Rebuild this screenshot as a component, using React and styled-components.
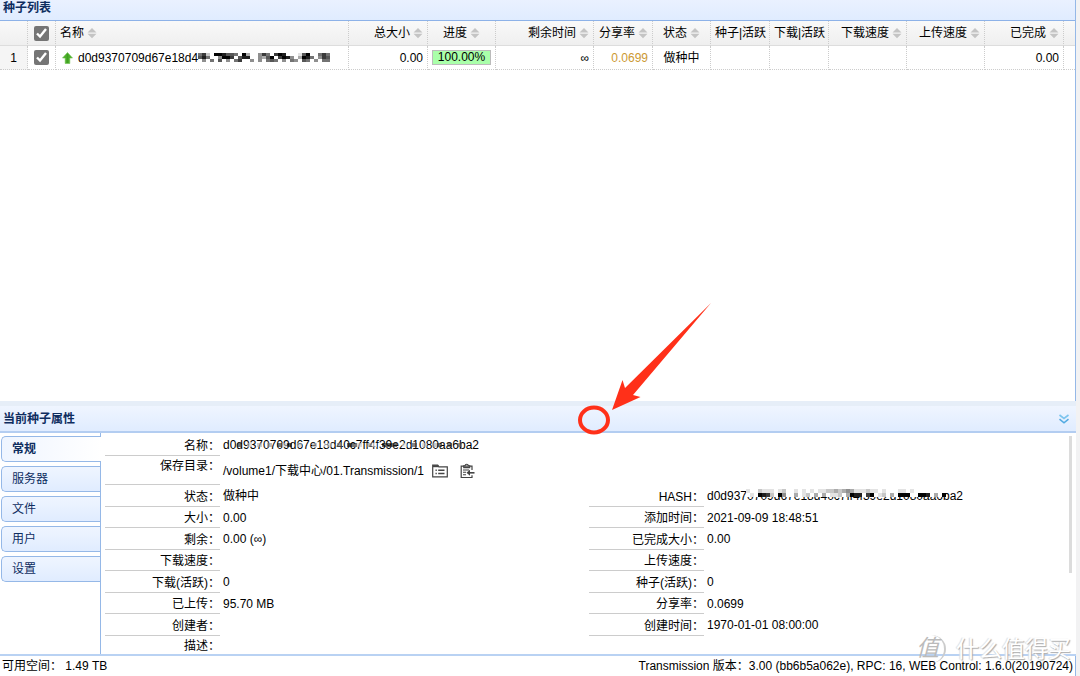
import React, { useState } from 'react';
import styled, { createGlobalStyle } from 'styled-components';

const GlobalStyle = createGlobalStyle`
  * {
    box-sizing: border-box;
  }

  body {
    margin: 0;
    background: #fff;
    color: #000;
    font: 12px/20px "Liberation Sans", "Noto Sans CJK SC", sans-serif;
  }

  button {
    padding: 0;
    border: none;
    background: none;
    color: inherit;
    font: inherit;
    cursor: pointer;
  }
`;

const Page = styled.div`
  display: flex;
  flex-direction: column;
  min-height: 100vh;
  padding-right: 4px;
  background: #f2f2f3;
`;

const ListPanel = styled.section`
  flex: 1;
  border-right: 1px solid #95b8e7;
  background: #fff;
`;

const PanelTitle = styled.h2`
  margin: 0;
  color: #0e2d5f;
  font-size: 12px;
  line-height: 16px;
`;

const ListHeader = styled.header`
  height: 21px;
  padding: 0 3px 4px;
  border-bottom: 1px solid #8db2e8;
  background: linear-gradient(to bottom, #eaf1ff, #e0ecff);
`;

const TorrentTable = styled.table`
  width: 100%;
  table-layout: fixed;
  border-collapse: separate;
  border-spacing: 0;
`;

const Col = styled.col`
  width: ${(props) => (props.$width ? `${props.$width}px` : 'auto')};
`;

const HeadCell = styled.th`
  height: 25px;
  padding: 0 4px;
  border-right: 1px dotted #ccc;
  border-bottom: 1px solid #ddd;
  background: linear-gradient(to bottom, #f9f9f9, #efefef);
  font-weight: normal;
  text-align: ${(props) => props.$align || 'center'};
  white-space: nowrap;

  &:last-child {
    border-right: none;
  }
`;

const Cell = styled.td`
  height: 24px;
  padding: 0 4px;
  border-right: 1px dotted #ccc;
  border-bottom: 1px dotted #ccc;
  background: ${(props) => (props.$number ? '#f5f5f5' : '#fff')};
  color: ${(props) => props.$color || '#000'};
  text-align: ${(props) => props.$align || 'center'};
  white-space: nowrap;

  &:last-child {
    border-right: none;
  }
`;

const SortButton = styled.button`
  display: inline-flex;
  align-items: center;
  gap: 3px;
`;

const Checkbox = styled.input`
  display: block;
  width: 15px;
  height: 15px;
  margin: 0 auto;
  accent-color: #757575;
`;

const NameBox = styled.div`
  display: flex;
  align-items: center;
  padding-left: 2px;

  svg:first-child {
    margin-right: 5px;
  }
`;

const Progress = styled.div`
  height: 15px;
  border: 1px solid #bbb;
  background: #aaffaa;
  line-height: 13px;
`;

const Splitter = styled.div`
  height: 5px;
  background: #e6eef8;
`;

const DetailHeader = styled.header`
  position: relative;
  display: flex;
  align-items: center;
  justify-content: space-between;
  height: 27px;
  padding: 0 6px 0 3px;
  border-bottom: 2px solid #b3cdf1;
  background: linear-gradient(to bottom, #eff5ff, #e0ecff);
`;

const CollapseButton = styled.button`
  display: flex;
`;

const Annotation = styled.svg`
  position: absolute;
  z-index: 1;
  left: 576px;
  bottom: -6px;
  pointer-events: none;
`;

const DetailBody = styled.div`
  position: relative;
  display: flex;
  border-bottom: 2px solid #b9d2f3;
  background: #fff;
`;

const Tabs = styled.nav`
  display: flex;
  flex-direction: column;
  gap: 4px;
  width: 101px;
  padding: 3px 0 0 1px;
  border-right: 1px solid #95b8e7;
`;

const Tab = styled.button`
  height: 26px;
  margin-right: ${(props) => (props.$active ? '-1px' : '0')};
  padding-left: 10px;
  border: 1px solid #95b8e7;
  border-right: none;
  border-radius: 5px 0 0 5px;
  background: ${(props) =>
    props.$active
      ? 'linear-gradient(to right, #eff5ff, #fff)'
      : 'linear-gradient(to bottom, #eff5ff, #e0ecff)'};
  color: #0e2d5f;
  font-weight: ${(props) => (props.$active ? 'bold' : 'normal')};
  text-align: left;
`;

const DetailContent = styled.div`
  flex: 1;
  padding: 1px 3px 0 4px;
`;

const DetailTable = styled.table`
  width: 100%;
  table-layout: fixed;
  border-spacing: 0;
`;

const DetailRow = styled.tr`
  height: ${(props) => (props.$tall ? '29px' : '21px')};

  &:nth-child(odd) {
    height: 22px;
  }

  &:last-child {
    height: 18px;
  }
`;

const Label = styled.th`
  padding: 2px 0 0;
  border-bottom: ${(props) => (props.$last ? 'none' : '1px solid #ccc')};
  font-weight: normal;
  line-height: 16px;
  text-align: right;
  vertical-align: ${(props) => (props.$top ? 'top' : 'middle')};
`;

const Value = styled.td`
  padding: 0 0 0 3px;
  line-height: 18px;
  white-space: nowrap;
`;

const ValueBox = styled.div`
  display: flex;
  align-items: center;
`;

const IconButton = styled.button`
  display: flex;
  margin-left: ${(props) => (props.$wide ? '12px' : '8px')};
`;

const MaskedText = styled.span`
  position: relative;
  display: inline-block;
`;

const MaskLayer = styled.span`
  position: absolute;
  top: ${(props) => props.$top}px;
  left: ${(props) => props.$left}px;
  line-height: 0;
`;

const ScrollThumb = styled.div`
  position: absolute;
  top: 3px;
  right: 4px;
  width: 3px;
  height: 62%;
  background: #dcdcdc;
`;

const StatusBar = styled.footer`
  position: relative;
  display: flex;
  justify-content: space-between;
  height: 20px;
  padding: 0 2px;
  border-right: 1px solid #95b8e7;
  background: #fff;
`;

const Watermark = styled.div`
  position: absolute;
  right: 4px;
  bottom: 13px;
  display: flex;
  align-items: center;
  gap: 10px;
  color: #fff;
  font-size: 23px;
  line-height: 26px;
  text-shadow: 1px 1px 1px #aaa, -1px 0 1px #ddd;
  pointer-events: none;
`;

const WatermarkBadge = styled.span`
  width: 30px;
  height: 28px;
  border-right: 2px solid #ccc;
  border-radius: 50%;
  color: #bbb;
  font-style: italic;
  text-shadow: none;
`;

const columns = [
  { label: '总大小', align: 'right', sort: true },
  { label: '进度', sort: true },
  { label: '剩余时间', align: 'right', sort: true },
  { label: '分享率', align: 'right', sort: true },
  { label: '状态', sort: true },
  { label: '种子|活跃' },
  { label: '下载|活跃' },
  { label: '下载速度', align: 'right', sort: true },
  { label: '上传速度', align: 'right', sort: true },
  { label: '已完成', align: 'right', sort: true },
];

const columnWidths = [28, 28, 293, 79, 68, 98, 59, 58, 59, 59, 78, 78, 79, null];

const tabs = ['常规', '服务器', '文件', '用户', '设置'];

const pairs = [
  ['大小', '0.00', '添加时间', '2021-09-09 18:48:51'],
  ['剩余', '0.00 (∞)', '已完成大小', '0.00'],
  ['下载速度', '', '上传速度', ''],
  ['下载(活跃)', '0', '种子(活跃)', '0'],
  ['已上传', '95.70 MB', '分享率', '0.0699'],
  ['创建者', '', '创建时间', '1970-01-01 08:00:00'],
];

// each character is one block: 0 is white, 9 is black, a dot is left clear
const nameMask = [
  '572.998665.93..475.798...169..575',
  '685..4997.688..4369.7984.3985.4764',
  '.4.5.6.4.57..4.4.565.4.54.65.4.5566',
].map((row) => row.slice(0, 33));
const titleMask = ['8.2.3.4.829.2..3.02.5.982.40.998.1.7.2.38.7.6'];
const hashMask = [
  '10021110120010101011223234311121101000110100000000',
  '01098720940030120303011203988079012030999009980309',
];

const Mosaic = ({ rows, width, height, opacity = 1 }) => (
  <svg
    width={rows[0].length * width}
    height={rows.length * height}
    shapeRendering="crispEdges"
    opacity={opacity}
    aria-hidden="true"
  >
    {rows.map((row, y) =>
      row.split('').map((level, x) => {
        if (level === '.') return null;
        const shade = 255 - Number(level) * 28;
        return (
          <rect
            key={`${x}-${y}`}
            x={x * width}
            y={y * height}
            width={width}
            height={height}
            fill={`rgb(${shade},${shade},${shade})`}
          />
        );
      })
    )}
  </svg>
);

const SortIcon = () => (
  <svg width="10" height="12" viewBox="0 0 10 12" fill="#c4c4c4" aria-hidden="true">
    <path d="M5 1 9.500 5.500H.5zM.5 6.800h9L5 11.300z" />
  </svg>
);

const UpArrow = () => (
  <svg width="11" height="12" viewBox="0 0 11 12" aria-hidden="true">
    <path d="M5.5.5 10.5 6H7.8v5.5H3.2V6H.5z" fill="#4caf2a" stroke="#6bbf4d" strokeWidth=".6" />
    <path d="M5.5 2v9" stroke="#3f9f22" strokeWidth="1.4" />
  </svg>
);

const FolderIcon = () => (
  <svg width="16" height="14" viewBox="0 0 16 14" fill="none" stroke="#444" aria-hidden="true">
    <path d="M.7 12.8V1.2h5l1.2 1.6h8.4v10z" strokeWidth="1.2" />
    <path d="M1 2.2h5.5" strokeWidth="2" />
    <path d="M3.5 6.2h1.3M6.2 6.2h6.3M3.5 9.5h1.3M6.2 9.5h6.3" strokeWidth="1.4" />
  </svg>
);

const ClipboardIcon = () => (
  <svg width="15" height="16" viewBox="0 0 15 16" fill="none" stroke="#444" aria-hidden="true">
    <path d="M12 7V3.2H1.2v11.3H12v-2.2" strokeWidth="1.2" />
    <path d="M3.7 4.6V2.8h1.4a1.6 1.6 0 0 1 3.2 0h1.4v1.8z" strokeWidth="1.1" />
    <path d="M3 7h6M3 9.3h3M3 11.8h3" strokeWidth="1.1" />
    <path d="M14.5 9.8H8.2" strokeWidth="1.6" />
    <path d="M6.5 9.8 10 6.8v6z" fill="#444" stroke="none" />
  </svg>
);

const CollapseIcon = () => (
  <svg width="12" height="12" viewBox="0 0 12 12" fill="none" strokeWidth="1.6" aria-hidden="true">
    <path d="M1.500 2 6 5.5 10.500 2" stroke="#7cc4ee" />
    <path d="M1.500 6.200 6 9.800l4.500-3.600" stroke="#52abe2" />
  </svg>
);

const App = () => {
  const [activeTab, setActiveTab] = useState('常规');

  return (
    <Page>
      <GlobalStyle />

      {/* Torrent list */}
      <ListPanel>
        <ListHeader>
          <PanelTitle>种子列表</PanelTitle>
        </ListHeader>
        <TorrentTable>
          <colgroup>
            {columnWidths.map((width, index) => (
              <Col key={index} $width={width} />
            ))}
          </colgroup>
          <thead>
            <tr>
              <HeadCell />
              <HeadCell>
                <Checkbox type="checkbox" defaultChecked aria-label="全选" />
              </HeadCell>
              <HeadCell $align="left">
                <SortButton type="button">
                  名称
                  <SortIcon />
                </SortButton>
              </HeadCell>
              {columns.map((column) => (
                <HeadCell key={column.label} $align={column.align}>
                  {column.sort ? (
                    <SortButton type="button">
                      {column.label}
                      <SortIcon />
                    </SortButton>
                  ) : (
                    column.label
                  )}
                </HeadCell>
              ))}
              <HeadCell />
            </tr>
          </thead>
          <tbody>
            <tr>
              <Cell $number>1</Cell>
              <Cell>
                <Checkbox type="checkbox" defaultChecked aria-label="选择" />
              </Cell>
              <Cell $align="left">
                <NameBox>
                  <UpArrow />
                  d0d9370709d67e18d4
                  <Mosaic rows={nameMask} width={4} height={3} />
                </NameBox>
              </Cell>
              <Cell $align="right">0.00</Cell>
              <Cell>
                <Progress>100.00%</Progress>
              </Cell>
              <Cell $align="right">∞</Cell>
              <Cell $align="right" $color="#cc9933">0.0699</Cell>
              <Cell>做种中</Cell>
              <Cell />
              <Cell />
              <Cell />
              <Cell />
              <Cell $align="right">0.00</Cell>
              <Cell />
            </tr>
          </tbody>
        </TorrentTable>
      </ListPanel>

      <Splitter />

      {/* Torrent attributes */}
      <section>
        <DetailHeader>
          <PanelTitle>当前种子属性</PanelTitle>
          <CollapseButton type="button" aria-label="折叠">
            <CollapseIcon />
          </CollapseButton>
          <Annotation width="140" height="136" viewBox="0 0 140 136" aria-hidden="true">
            <ellipse cx="18" cy="119" rx="14" ry="12.500" fill="none" stroke="#ff3019" strokeWidth="4" />
            <path d="M36 109 46.500 79 49 87 135 2 57 94 64.500 96z" fill="#ff3019" />
          </Annotation>
        </DetailHeader>
        <DetailBody>
          <Tabs>
            {tabs.map((tab) => (
              <Tab
                key={tab}
                type="button"
                $active={tab === activeTab}
                onClick={() => setActiveTab(tab)}
              >
                {tab}
              </Tab>
            ))}
          </Tabs>
          <DetailContent>
            <DetailTable>
              <colgroup>
                <Col $width={115} />
                <Col />
                <Col $width={115} />
                <Col />
              </colgroup>
              <tbody>
                <DetailRow>
                  <Label scope="row">名称：</Label>
                  <Value colSpan={3}>
                    <MaskedText>
                      d0d9370709d67e18d40c7ff4f39e2d1080aa6ba2
                      <MaskLayer $top={7} $left={14}>
                        <Mosaic rows={titleMask} width={5} height={4} opacity={0.6} />
                      </MaskLayer>
                    </MaskedText>
                  </Value>
                </DetailRow>
                <DetailRow $tall>
                  <Label scope="row" $top>保存目录：</Label>
                  <Value colSpan={3}>
                    <ValueBox>
                      /volume1/下载中心/01.Transmission/1
                      <IconButton type="button" aria-label="更改目录">
                        <FolderIcon />
                      </IconButton>
                      <IconButton type="button" $wide aria-label="复制目录">
                        <ClipboardIcon />
                      </IconButton>
                    </ValueBox>
                  </Value>
                </DetailRow>
                <DetailRow>
                  <Label scope="row">状态：</Label>
                  <Value>做种中</Value>
                  <Label scope="row">HASH：</Label>
                  <Value>
                    <MaskedText>
                      d0d9370709d67e18d40c7ff4f39e2d1080aa6ba2
                      <MaskLayer $top={2} $left={39}>
                        <Mosaic rows={hashMask} width={4} height={4} />
                      </MaskLayer>
                    </MaskedText>
                  </Value>
                </DetailRow>
                {pairs.map(([label, value, label2, value2]) => (
                  <DetailRow key={label}>
                    <Label scope="row">{label}：</Label>
                    <Value>{value}</Value>
                    <Label scope="row">{label2}：</Label>
                    <Value>{value2}</Value>
                  </DetailRow>
                ))}
                <DetailRow>
                  <Label scope="row" $last>描述：</Label>
                  <Value colSpan={3} />
                </DetailRow>
              </tbody>
            </DetailTable>
          </DetailContent>
          <ScrollThumb />
        </DetailBody>
      </section>

      <StatusBar>
        <span>可用空间： 1.49 TB</span>
        <span>Transmission 版本：3.00 (bb6b5a062e), RPC: 16, WEB Control: 1.6.0(20190724)</span>
        <Watermark>
          <WatermarkBadge>值</WatermarkBadge>
          什么值得买
        </Watermark>
      </StatusBar>
    </Page>
  );
};

export default App;
